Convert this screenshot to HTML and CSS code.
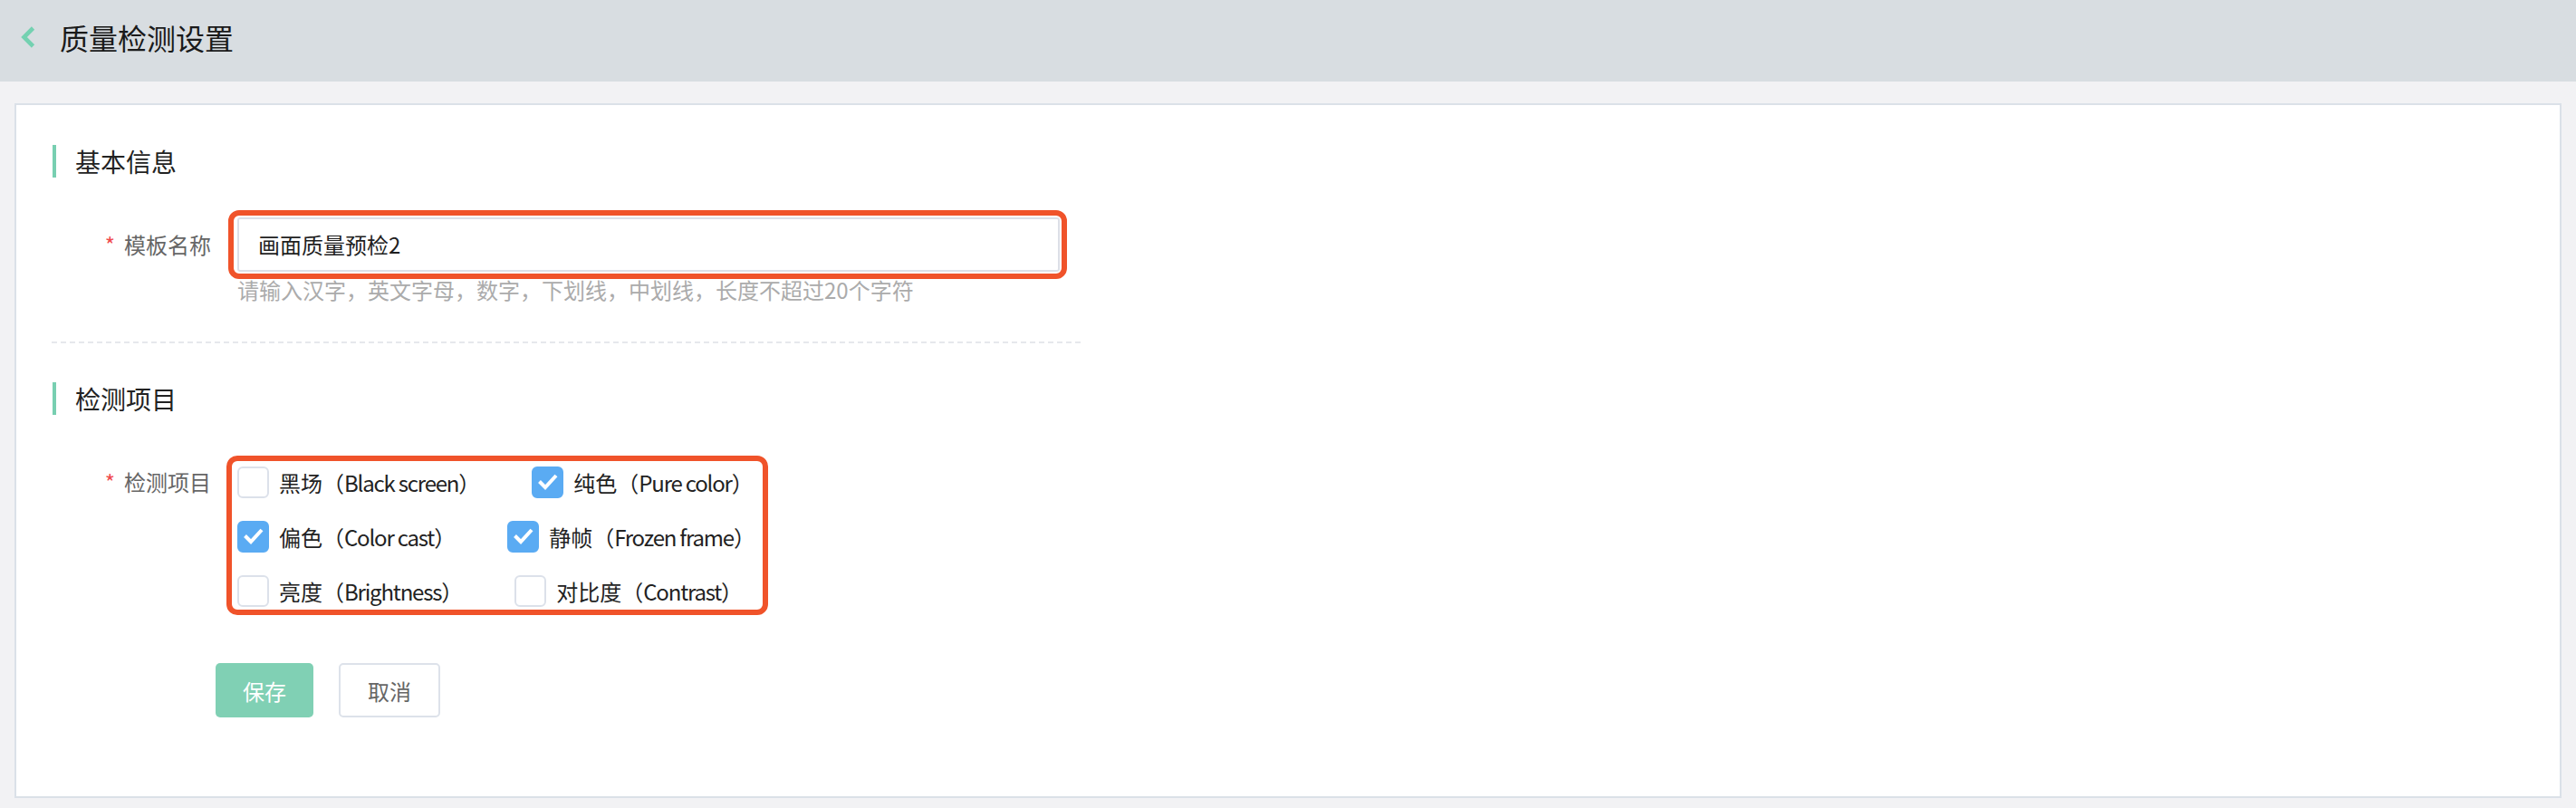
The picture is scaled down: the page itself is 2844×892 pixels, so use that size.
FILE: index.html
```html
<!DOCTYPE html>
<html lang="zh-CN">
<head>
<meta charset="utf-8">
<title>质量检测设置</title>
<link rel="stylesheet" href="styles.css">
</head>
<body>
<header class="topbar">
  <svg class="back" width="16" height="24" viewBox="0 0 16 24"><polyline points="13.5,2 3.5,12 13.5,22" fill="none" stroke="#74d1b1" stroke-width="4.6"/></svg>
  <h1 class="page-title">质量检测设置</h1>
</header>
<main class="card">
  <div class="section-title">基本信息</div>
  <div class="form-item">
    <label class="form-label"><span class="req">*</span>模板名称</label>
    <div class="form-control">
      <div class="annot annot-input">
        <div class="input">画面质量预检2</div>
      </div>
      <div class="hint">请输入汉字，英文字母，数字，下划线，中划线，长度不超过20个字符</div>
    </div>
  </div>
  <div class="divider"></div>
  <div class="section-title">检测项目</div>
  <div class="form-item">
    <label class="form-label"><span class="req">*</span>检测项目</label>
    <div class="form-control">
      <div class="annot annot-group">
        <div class="check-group">
          <div class="check-row">
            <div class="check"><span class="box"></span><span class="check-text">黑场（<span class="en">Black screen</span>）</span></div>
            <div class="check"><span class="box checked"><svg width="35" height="35" viewBox="0 0 35 35"><polyline points="8.5,16.5 15,23 27,10" fill="none" stroke="#fff" stroke-width="4"/></svg></span><span class="check-text">纯色（<span class="en">Pure color</span>）</span></div>
          </div>
          <div class="check-row">
            <div class="check"><span class="box checked"><svg width="35" height="35" viewBox="0 0 35 35"><polyline points="8.5,16.5 15,23 27,10" fill="none" stroke="#fff" stroke-width="4"/></svg></span><span class="check-text">偏色（<span class="en">Color cast</span>）</span></div>
            <div class="check"><span class="box checked"><svg width="35" height="35" viewBox="0 0 35 35"><polyline points="8.5,16.5 15,23 27,10" fill="none" stroke="#fff" stroke-width="4"/></svg></span><span class="check-text">静帧（<span class="en">Frozen frame</span>）</span></div>
          </div>
          <div class="check-row">
            <div class="check"><span class="box"></span><span class="check-text">亮度（<span class="en">Brightness</span>）</span></div>
            <div class="check"><span class="box"></span><span class="check-text">对比度（<span class="en">Contrast</span>）</span></div>
          </div>
        </div>
      </div>
    </div>
  </div>
  <div class="actions">
    <button class="btn btn-primary">保存</button>
    <button class="btn btn-default">取消</button>
  </div>
</main>
</body>
</html>
```

FILE: styles.css
```css
* { box-sizing: border-box; }
html, body { margin: 0; padding: 0; }
body {
  background: #f2f2f4;
  font-family: "Noto Sans CJK SC", "Noto Sans", sans-serif;
  color: #222;
}
.topbar {
  height: 90px;
  background: #d8dde1;
  display: flex;
  align-items: center;
  padding: 0 0 8px 23px;
}
.back { display: block; flex: none; }
.page-title {
  margin: 0 0 0 27px;
  font-size: 32px;
  font-weight: 400;
  color: #1a1a1a;
  line-height: 40px;
}
.card {
  margin: 24px 16px 0;
  height: 767px;
  background: #fff;
  border: 2px solid #dbe1e8;
  padding: 44px 0 0 0;
}
.section-title {
  margin-left: 40px;
  height: 36px;
  line-height: 36px;
  border-left: 4px solid #78cfb1;
  padding-left: 21px;
  font-size: 28px;
  color: #222;
}
.form-item {
  display: flex;
  align-items: flex-start;
  margin-top: 44px;
}
.form-label {
  width: 244px;
  flex: none;
  text-align: right;
  padding-right: 29px;
  font-size: 24px;
  line-height: 60px;
  color: #666;
}
.req {
  color: #f04a4f;
  margin-right: 10px;
}
.form-control { display: flex; flex-direction: column; align-items: flex-start; }
.annot { position: relative; }
.annot::before {
  content: "";
  position: absolute;
  border: 6px solid #f0532a;
  border-radius: 12px;
  pointer-events: none;
}
.annot-input::before { top: -8px; bottom: -8px; left: -10px; right: -8px; }
.annot-group::before { top: 1px; bottom: 3px; left: -12px; right: -6px; }
.input {
  width: 908px;
  height: 60px;
  border: 2px solid #dcdfe7;
  border-radius: 3px;
  padding: 0 21px;
  font-size: 24px;
  line-height: 56px;
  color: #1f1f1f;
}
.hint {
  margin-top: 2px;
  font-size: 24px;
  line-height: 36px;
  color: #ababab;
}
.divider {
  margin: 39px 0 43px 39px;
  width: 1136px;
  border-top: 2px dashed #e6e8ec;
}
.check-group {
  width: 580px;
  display: flex;
  flex-direction: column;
}
.check-row {
  display: flex;
  column-gap: 57px;
}
.check {
  display: flex;
  align-items: center;
  height: 60px;
}
.box {
  width: 35px;
  height: 35px;
  border: 2px solid #dce1ea;
  border-radius: 6px;
  background: #fff;
  flex: none;
  position: relative;
}
.box.checked {
  background: #5aabf3;
  border-color: #5aabf3;
}
.box svg { position: absolute; left: -2px; top: -2px; }
.check-text {
  margin-left: 11px;
  font-size: 24px;
  color: #222;
  white-space: nowrap;
}
.en { letter-spacing: -1.2px; }
.actions {
  display: flex;
  margin: 50px 0 0 220px;
  gap: 28px;
}
.btn {
  height: 60px;
  font-family: inherit;
  font-size: 24px;
  border-radius: 5px;
  padding: 0;
  cursor: pointer;
}
.btn-primary {
  width: 108px;
  background: #80d0b4;
  border: none;
  color: #fff;
}
.btn-default {
  width: 112px;
  background: #fff;
  border: 2px solid #dde2ea;
  color: #666;
}
```
